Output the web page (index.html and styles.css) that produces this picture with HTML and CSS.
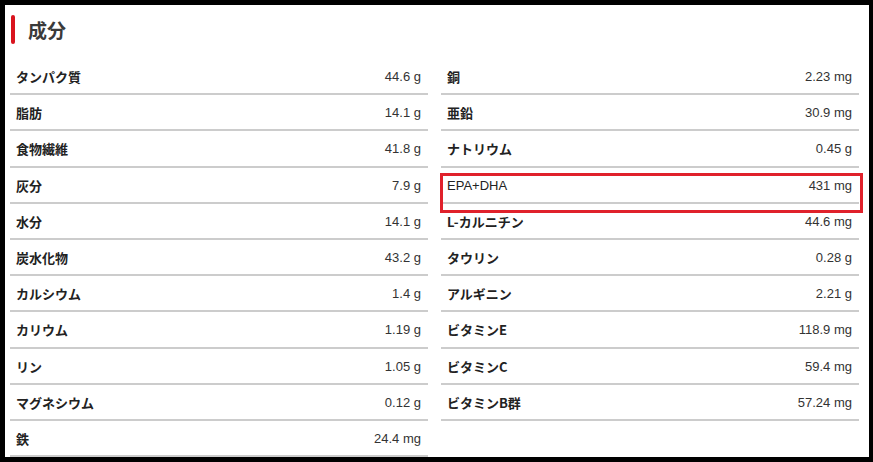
FILE: index.html
```html
<!DOCTYPE html>
<html lang="ja">
<head>
<meta charset="utf-8">
<link rel="stylesheet" href="styles.css">
</head>
<body>
<div class="frame">
  <h2 class="title">成分</h2>
  <div class="grid">
    <ul class="col">
      <li class="row"><span class="name">タンパク質</span><span class="val">44.6 g</span></li>
      <li class="row"><span class="name">脂肪</span><span class="val">14.1 g</span></li>
      <li class="row"><span class="name">食物繊維</span><span class="val">41.8 g</span></li>
      <li class="row"><span class="name">灰分</span><span class="val">7.9 g</span></li>
      <li class="row"><span class="name">水分</span><span class="val">14.1 g</span></li>
      <li class="row"><span class="name">炭水化物</span><span class="val">43.2 g</span></li>
      <li class="row"><span class="name">カルシウム</span><span class="val">1.4 g</span></li>
      <li class="row"><span class="name">カリウム</span><span class="val">1.19 g</span></li>
      <li class="row"><span class="name">リン</span><span class="val">1.05 g</span></li>
      <li class="row"><span class="name">マグネシウム</span><span class="val">0.12 g</span></li>
      <li class="row"><span class="name">鉄</span><span class="val">24.4 mg</span></li>
    </ul>
    <ul class="col">
      <li class="row"><span class="name">銅</span><span class="val">2.23 mg</span></li>
      <li class="row"><span class="name">亜鉛</span><span class="val">30.9 mg</span></li>
      <li class="row"><span class="name">ナトリウム</span><span class="val">0.45 g</span></li>
      <li class="row hl"><span class="name plain">EPA+DHA</span><span class="val">431 mg</span></li>
      <li class="row"><span class="name">L-カルニチン</span><span class="val">44.6 mg</span></li>
      <li class="row"><span class="name">タウリン</span><span class="val">0.28 g</span></li>
      <li class="row"><span class="name">アルギニン</span><span class="val">2.21 g</span></li>
      <li class="row"><span class="name">ビタミンE</span><span class="val">118.9 mg</span></li>
      <li class="row"><span class="name">ビタミンC</span><span class="val">59.4 mg</span></li>
      <li class="row"><span class="name">ビタミンB群</span><span class="val">57.24 mg</span></li>
    </ul>
  </div>
</div>
</body>
</html>
```

FILE: styles.css
```css
* { box-sizing: border-box; }
html, body { margin: 0; padding: 0; background: #fff; }
.frame {
  width: 873px;
  height: 462px;
  border-style: solid;
  border-color: #000;
  border-width: 5px 4px 5px 5px;
  padding: 10px 10px 0 5px;
  overflow: hidden;
}
.title {
  margin: 0;
  height: 29px;
  display: flex;
  align-items: center;
  gap: 13px;
  font-family: "Noto Sans CJK JP", sans-serif;
  font-weight: 700;
  font-size: 19px;
  color: #3a3a3a;
  line-height: 1;
  padding-left: 1px;
}
.title::before {
  content: "";
  width: 4px;
  height: 29px;
  background: #d9141e;
  border-radius: 2px;
}
.grid {
  display: flex;
  gap: 13px;
  margin-top: 15px;
}
.col {
  list-style: none;
  margin: 0;
  padding: 0;
  width: 418px;
}
.row {
  position: relative;
  height: 36.2px;
  display: flex;
  justify-content: space-between;
  align-items: center;
  padding: 1px 7px 0 6px;
  border-bottom: 2px solid #cccccc;
}
.name {
  font-family: "Noto Sans CJK JP", sans-serif;
  font-weight: 700;
  font-size: 13px;
  color: #222;
}
.name.plain {
  font-family: "Liberation Sans", "Noto Sans CJK JP", sans-serif;
  font-weight: 400;
}
.val {
  font-family: "Liberation Sans", sans-serif;
  font-size: 13px;
  color: #333;
}
.hl::after {
  content: "";
  position: absolute;
  left: -1px;
  right: -4px;
  top: 5px;
  height: 34px;
  border: 3px solid #e0212b;
}
```
